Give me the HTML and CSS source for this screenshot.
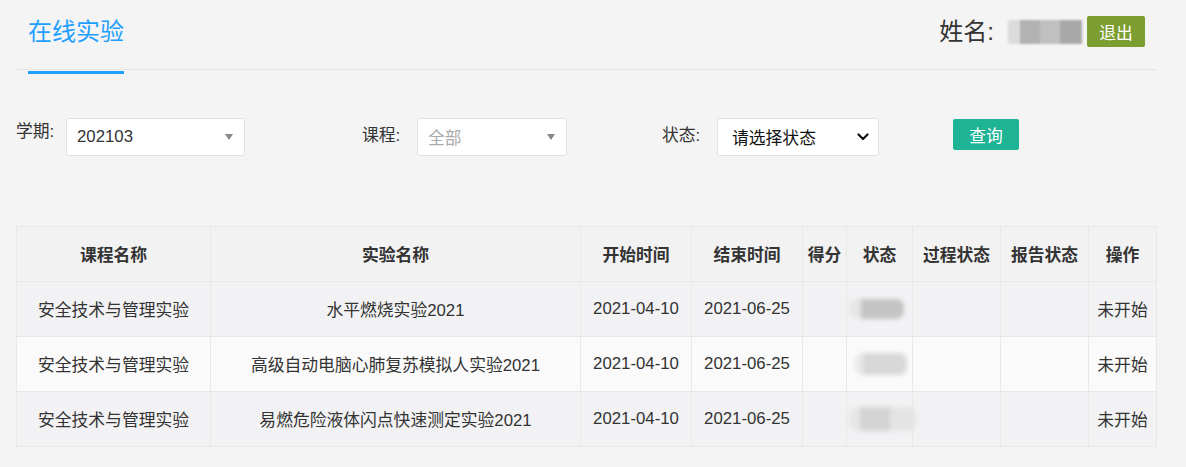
FILE: index.html
```html
<!DOCTYPE html>
<html lang="zh-CN">
<head>
<meta charset="utf-8">
<title>在线实验</title>
<link rel="stylesheet" href="styles.css">
</head>
<body>
<div class="page">
  <header class="header">
    <div class="tab">在线实验</div>
    <div class="user">
      <span class="user-label">姓名:</span>
      <span class="name-blur"><i class="b1"></i><i class="b2"></i><i class="b3"></i><i class="b4"></i></span>
      <button class="btn-logout">退出</button>
    </div>
  </header>

  <div class="filters">
    <div class="field field-term">
      <label class="lbl lbl-first">学期:</label>
      <div class="fake-select sel-term"><span class="val">202103</span><span class="tri"></span></div>
    </div>
    <div class="field field-course">
      <label class="lbl">课程:</label>
      <div class="fake-select sel-course"><span class="val placeholder">全部</span><span class="tri"></span></div>
    </div>
    <div class="field field-status">
      <label class="lbl">状态:</label>
      <div class="fake-select sel-status"><span class="val native">请选择状态</span>
        <svg class="chev" width="12" height="8" viewBox="0 0 12 8"><path d="M1.5 1.5 L6 6 L10.5 1.5" fill="none" stroke="#111" stroke-width="2.2" stroke-linecap="round" stroke-linejoin="round"/></svg>
      </div>
    </div>
    <button class="btn-query">查询</button>
  </div>

  <table class="grid">
    <colgroup>
      <col class="c1"><col class="c2"><col class="c3"><col class="c4"><col class="c5"><col class="c6"><col class="c7"><col class="c8"><col class="c9">
    </colgroup>
    <thead>
      <tr><th>课程名称</th><th>实验名称</th><th>开始时间</th><th>结束时间</th><th>得分</th><th>状态</th><th>过程状态</th><th>报告状态</th><th>操作</th></tr>
    </thead>
    <tbody>
      <tr class="odd"><td>安全技术与管理实验</td><td>水平燃烧实验2021</td><td>2021-04-10</td><td>2021-06-25</td><td></td><td class="st"><span class="blob blob1"></span></td><td></td><td></td><td>未开始</td></tr>
      <tr class="even"><td>安全技术与管理实验</td><td>高级自动电脑心肺复苏模拟人实验2021</td><td>2021-04-10</td><td>2021-06-25</td><td></td><td class="st"><span class="blob blob2"></span></td><td></td><td></td><td>未开始</td></tr>
      <tr class="odd"><td>安全技术与管理实验</td><td>易燃危险液体闪点快速测定实验2021</td><td>2021-04-10</td><td>2021-06-25</td><td></td><td class="st"><span class="blob blob3"></span></td><td></td><td></td><td>未开始</td></tr>
    </tbody>
  </table>
</div>
</body>
</html>
```

FILE: styles.css
```css
* { box-sizing: border-box; }
html, body { margin: 0; padding: 0; }
body {
  background: #f4f4f4;
  font-family: "Liberation Sans", "Noto Sans CJK SC", sans-serif;
  color: #333;
  font-size: 16.8px;
}
.page {
  width: 1140px;
  margin-left: 16px;
}

/* header */
.header {
  display: flex;
  justify-content: space-between;
  align-items: flex-start;
  height: 70px;
  border-bottom: 1px solid #e4e4e4;
}
.tab {
  margin-left: 12px;
  padding: 19px 0 0;
  height: 74px;
  width: 96px;
  font-size: 24px;
  line-height: 26px;
  color: #1e9fff;
  border-bottom: 3px solid #1e9fff;
  flex: none;
}
.user {
  display: flex;
  align-items: center;
  margin-right: 11px;
  padding-top: 16px;
}
.user-label {
  font-size: 24px;
  line-height: 31px;
  color: #333;
}
.name-blur {
  display: flex;
  width: 74px;
  height: 24px;
  margin: 0 5px 0 14px;
  filter: blur(1px);
}
.name-blur i { display: block; height: 100%; }
.name-blur .b1 { width: 12px; background: #dcdcdc; }
.name-blur .b2 { width: 20px; background: #b2b2b2; }
.name-blur .b3 { width: 20px; background: #c0c0c0; }
.name-blur .b4 { width: 22px; background: #a9a9a9; }
.btn-logout {
  width: 58px;
  height: 31px;
  border: none;
  border-radius: 2px;
  background: #7c9e31;
  color: #fff;
  font-family: inherit;
  font-size: 16.8px;
  padding: 0;
}

/* filters */
.filters {
  display: flex;
  align-items: flex-start;
  margin-top: 48px;
  height: 38px;
}
.field { display: flex; align-items: flex-start; }
.field-term { width: 346px; }
.field-course { width: 300px; }
.field-status { width: 291px; }
.lbl {
  width: 55px;
  line-height: 20px;
  padding-top: 8px;
  font-size: 16.8px;
  color: #333;
}
.lbl-first { width: 50px; padding-top: 4px; }
.fake-select {
  display: flex;
  align-items: center;
  height: 38px;
  background: #fff;
  border: 1px solid #e2e2e2;
  border-radius: 3px;
  padding: 0 10px;
}
.sel-term { width: 179px; }
.sel-course { width: 150px; }
.sel-status { width: 162px; padding: 0 9px 0 14px; }
.val { flex: 1; font-size: 16.8px; color: #333; }
.val.placeholder { color: #aaa; }
.val.native { color: #111; }
.tri {
  width: 0; height: 0;
  border-left: 4.5px solid transparent;
  border-right: 4.5px solid transparent;
  border-top: 6px solid #888;
  margin-right: 1px;
}
.chev { flex: none; }
.btn-query {
  width: 66px;
  height: 31px;
  margin-top: 1px;
  border: none;
  border-radius: 2px;
  background: #1eb394;
  color: #fff;
  font-family: inherit;
  font-size: 16.8px;
  padding: 0;
}

/* table */
.grid {
  margin-top: 70px;
  width: 1140px;
  border-collapse: collapse;
  table-layout: fixed;
  font-size: 16.8px;
}
.c1 { width: 194px; } .c2 { width: 370px; } .c3 { width: 111px; } .c4 { width: 111px; }
.c5 { width: 44px; } .c6 { width: 66px; } .c7 { width: 88px; } .c8 { width: 88px; } .c9 { width: 68px; }
.grid th, .grid td {
  border: 1px solid #e8e8e8;
  height: 55px;
  padding: 0;
  text-align: center;
  white-space: nowrap;
  color: #333;
}
.grid th { background: #f2f2f2; font-weight: bold; }
.grid tr.odd td { background: #f2f2f4; }
.grid tr.even td { background: #fafafa; }
.st { position: relative; }
.blob {
  display: block;
  background: #c6c6c6;
  filter: blur(2px);
  border-radius: 8px;
}
.blob1 { width: 54px; height: 20px; margin-left: 3px; background: linear-gradient(90deg, #e6e6e6 0 20%, #c4c4c4 20% 100%); }
.blob2 { width: 52px; height: 22px; margin-left: 8px; background: linear-gradient(90deg, #e8e8e8 0 15%, #d8d8d8 15% 100%); }
.blob3 { width: 66px; height: 24px; margin-left: 3px; background: linear-gradient(90deg, #e6e6e6 0 15%, #d4d4d4 15% 60%, #e4e4e4 60% 100%); }
```
